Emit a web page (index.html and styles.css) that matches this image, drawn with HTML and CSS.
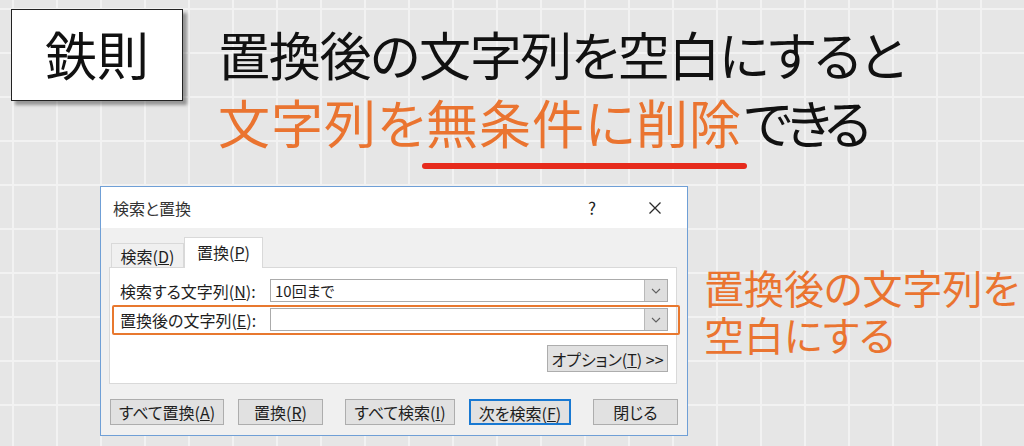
FILE: index.html
```html
<!DOCTYPE html>
<html lang="ja">
<head>
    <meta charset="UTF-8">
    <meta name="viewport" content="width=device-width, initial-scale=1.0">
    <title>置換で文字列を削除</title>
    <link rel="stylesheet" href="styles.css">
</head>
<body>
    <header class="head">
        <div class="rule-box">鉄則</div>
        <h1 class="headline">
            <span class="line line-first">置換後の文字列を空白にすると</span>
            <span class="line"><span class="accent">文字列を</span><span class="accent mark">無条件に削除</span><span class="tail">できる</span></span>
        </h1>
    </header>

    <main class="stage">
        <section class="dialog">
            <div class="dialog-title">
                <span class="caption">検索と置換</span>
                <span class="help">?</span>
                <span class="close">
                    <svg width="14" height="14" viewBox="0 0 14 14">
                        <path d="M1.5 1.5 L12.5 12.5 M12.5 1.5 L1.5 12.5" stroke="#2b2b2b" stroke-width="1.3" fill="none"/>
                    </svg>
                </span>
            </div>
            <div class="dialog-body">
                <div class="tabs">
                    <div class="tab">検索(<u>D</u>)</div>
                    <div class="tab tab-active">置換(<u>P</u>)</div>
                </div>
                <div class="panel">
                    <div class="field">
                        <span class="field-label">検索する文字列(<u>N</u>):</span>
                        <div class="combo">
                            <span class="combo-text">10回まで</span>
                            <span class="combo-btn">
                                <svg width="10" height="6" viewBox="0 0 10 6"><path d="M1 1 L5 5 L9 1" stroke="#606060" stroke-width="1.1" fill="none"/></svg>
                            </span>
                        </div>
                    </div>
                    <div class="field field-marked">
                        <span class="field-label">置換後の文字列(<u>E</u>):</span>
                        <div class="combo">
                            <span class="combo-text"></span>
                            <span class="combo-btn">
                                <svg width="10" height="6" viewBox="0 0 10 6"><path d="M1 1 L5 5 L9 1" stroke="#606060" stroke-width="1.1" fill="none"/></svg>
                            </span>
                        </div>
                    </div>
                    <div class="panel-foot">
                        <button class="btn btn-options">オプション(<u>T</u>) &gt;&gt;</button>
                    </div>
                </div>
                <div class="actions">
                    <div class="group">
                        <button class="btn btn-all">すべて置換(<u>A</u>)</button>
                        <button class="btn btn-one">置換(<u>R</u>)</button>
                    </div>
                    <div class="group">
                        <button class="btn btn-find-all">すべて検索(<u>I</u>)</button>
                        <button class="btn btn-next">次を検索(<u>F</u>)</button>
                    </div>
                    <div class="group">
                        <button class="btn btn-one">閉じる</button>
                    </div>
                </div>
            </div>
        </section>

        <p class="note">
            <span class="note-line">置換後の文字列を</span>
            <span class="note-line">空白にする</span>
        </p>
    </main>
</body>
</html>
```

FILE: styles.css
```css
body {
    width: 1024px;
    height: 446px;
    margin: 0;
    overflow: hidden;
    background-color: #e6e6e6;
    background-image:
        linear-gradient(to right, #f2f2f2 2px, transparent 2px),
        linear-gradient(to bottom, #f2f2f2 2px, transparent 2px);
    background-size: 44px 44px;
    background-position: 12px 8px;
    font-family: 'Noto Sans CJK JP', 'Noto Sans', sans-serif;
    font-feature-settings: 'palt';
    color: #111;
}

.head {
    display: flex;
    align-items: flex-start;
    padding: 9px 0 0 11px;
}

.rule-box {
    display: flex;
    justify-content: center;
    align-items: center;
    width: 172px;
    height: 92px;
    box-sizing: border-box;
    border: 1px solid #222;
    background: #ffffff;
    box-shadow: 4px 4px 3px rgba(0, 0, 0, 0.35);
    font-size: 52px;
    line-height: 1;
    padding-bottom: 2px;
}

.headline {
    display: flex;
    flex-direction: column;
    margin: 11px 0 0 35px;
    font-size: 52px;
    font-weight: normal;
    line-height: 68px;
    white-space: nowrap;
}

.line-first {
    letter-spacing: -1.3px;
}

.accent {
    color: #ea7430;
    letter-spacing: 1px;
}

.tail {
    margin-left: 2px;
    letter-spacing: -6px;
}

.mark {
    position: relative;
}

.mark::after {
    content: '';
    position: absolute;
    left: -4px;
    right: -5px;
    bottom: -10px;
    height: 6px;
    border-radius: 3px;
    background: #e62a1c;
}

.stage {
    display: flex;
    align-items: flex-start;
    margin-top: 30px;
    padding-left: 100px;
}

/* dialog */

.dialog {
    width: 588px;
    height: 250px;
    box-sizing: border-box;
    border: 1px solid #6f9fd6;
    background: #f0f0f0;
    font-size: 16px;
    color: #1e1e1e;
}

.dialog-title {
    display: flex;
    align-items: center;
    height: 41px;
    padding: 0 20px 0 12px;
    background: #ffffff;
}

.caption {
    flex: 1;
    color: #333;
}

.help {
    width: 20px;
    text-align: center;
    margin-right: 41px;
    font-size: 17px;
}

.close {
    display: flex;
    justify-content: center;
    width: 24px;
}

.dialog-body {
    padding: 9px 10px 0 8px;
}

.tabs {
    display: flex;
    align-items: flex-end;
    padding-left: 2px;
}

.tab {
    display: flex;
    align-items: center;
    justify-content: center;
    width: 73px;
    height: 24px;
    box-sizing: border-box;
    border: 1px solid #d9d9d9;
    border-bottom: none;
    background: #f0f0f0;
    font-size: 16px;
}

.tab-active {
    position: relative;
    z-index: 1;
    width: 79px;
    height: 31px;
    margin-bottom: -1px;
    background: #ffffff;
    padding-bottom: 3px;
}

.panel {
    padding: 11px 8px 11px 10px;
    border: 1px solid #d9d9d9;
    background: #ffffff;
}

.field {
    display: flex;
    align-items: center;
    height: 23px;
}

.field-label {
    width: 150px;
    white-space: nowrap;
}

.field-marked {
    margin: 3px -12px 0 -8px;
    padding: 1px 10px 2px 6px;
    border: 2px solid #e8782f;
    border-radius: 2px;
}

.combo {
    flex: 1;
    display: flex;
    height: 23px;
    box-sizing: border-box;
    border: 1px solid #ababab;
    background: #ffffff;
}

.combo-text {
    flex: 1;
    padding-left: 4px;
    font-size: 15px;
    line-height: 21px;
}

.combo-btn {
    display: flex;
    justify-content: center;
    align-items: center;
    width: 22px;
    border-left: 1px solid #b9b9b9;
    background: #dedede;
}

.panel-foot {
    display: flex;
    justify-content: flex-end;
    margin-top: 10px;
}

.btn {
    height: 26px;
    padding: 0;
    box-sizing: border-box;
    border: 1px solid #adadad;
    background: #e1e1e1;
    font-family: inherit;
    font-feature-settings: 'palt';
    font-size: 16px;
    color: #1e1e1e;
}

.btn-options {
    width: 121px;
    height: 27px;
}

.actions {
    display: flex;
    gap: 22px;
    margin-top: 15px;
    padding-left: 1px;
}

.group {
    display: flex;
    gap: 14px;
}

.btn-all {
    width: 114px;
}

.btn-one {
    width: 85px;
}

.btn-find-all {
    width: 110px;
}

.btn-next {
    width: 102px;
    border: 2px solid #1979d2;
}

.note {
    display: flex;
    flex-direction: column;
    margin: 78px 0 0 16px;
    font-size: 40px;
    line-height: 47px;
    color: #ea7430;
    white-space: nowrap;
}
```
